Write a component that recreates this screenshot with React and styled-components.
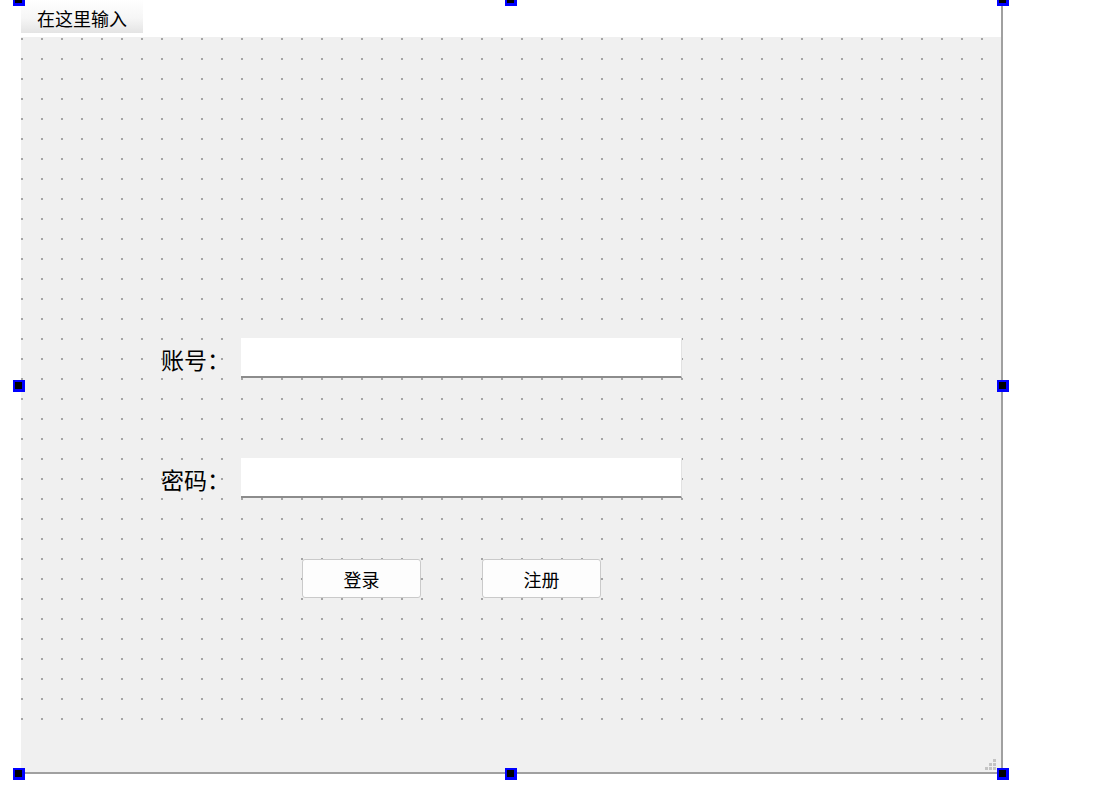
import React from "react";
import styled, { createGlobalStyle } from "styled-components";

const GlobalStyle = createGlobalStyle`
  html, body {
    margin: 0;
    padding: 0;
    background: #ffffff;
  }
  body {
    font-family: "Noto Sans CJK SC", "Noto Sans", sans-serif;
    color: #000;
  }
`;

const Canvas = styled.div`
  position: relative;
  width: 1109px;
  height: 812px;
  overflow: hidden;
  background: #ffffff;
`;

const FormFrame = styled.div`
  margin-left: 21px;
  width: 980px;
  height: 772px;
  display: flex;
  flex-direction: column;
  border-right: 2px solid #a0a0a0;
  border-bottom: 2px solid #a0a0a0;
`;

const MenuBar = styled.div`
  height: 37px;
  flex: none;
  display: flex;
  align-items: flex-start;
  background: #ffffff;
`;

const MenuItem = styled.div`
  width: 122px;
  height: 33px;
  box-sizing: border-box;
  padding: 5px 0 0 16px;
  font-size: 18px;
  line-height: 26px;
  background: linear-gradient(#ffffff 0%, #f6f6f6 55%, #e4e4e4 100%);
`;

const Central = styled.div`
  height: 700px;
  flex: none;
  box-sizing: border-box;
  padding: 301px 0 0 140px;
  background-color: #f0f0f0;
  background-image: linear-gradient(to right, transparent 2px, #f0f0f0 2px),
    linear-gradient(to bottom, #a4a4a4 2px, #f0f0f0 2px);
  background-size: 20px 20px, 20px 20px;
  background-position: 0 1px, 0 1px;
  display: flex;
  flex-direction: column;
`;

const FieldRow = styled.div`
  display: flex;
  align-items: center;
  height: 40px;
  margin-bottom: ${(p) => p.$gap}px;
`;

const Label = styled.div`
  width: 80px;
  font-size: 23px;
  line-height: 40px;
  padding-top: 2px;
  box-sizing: border-box;
`;

const Input = styled.div`
  width: 441px;
  height: 40px;
  box-sizing: border-box;
  background: #ffffff;
  border-right: 1px solid #e2e2e2;
  border-bottom: 2px solid #8c8c8c;
`;

const ButtonRow = styled.div`
  display: flex;
  gap: 61px;
  padding-left: 141px;
`;

const Button = styled.div`
  width: 119px;
  height: 39px;
  box-sizing: border-box;
  border: 1px solid #cacaca;
  border-radius: 3px;
  background: #fdfdfd;
  display: flex;
  align-items: center;
  justify-content: center;
  font-size: 18px;
`;

const StatusBar = styled.div`
  flex: 1;
  background: #f0f0f0;
  display: flex;
  justify-content: flex-end;
  align-items: flex-end;
  padding: 0 4px 2px 0;
`;

const Handle = styled.div`
  position: absolute;
  left: ${(p) => p.$x}px;
  top: ${(p) => p.$y}px;
  width: 12px;
  height: 12px;
  box-sizing: border-box;
  background: #000;
  border: 2px solid #0000ff;
  border-right-width: 3px;
  border-bottom-width: 3px;
`;

const SizeGrip = () => (
  <svg width="12" height="12" viewBox="0 0 12 12">
    <g fill="#c4c4c4">
      <rect x="8" y="1" width="3" height="3" />
      <rect x="4" y="5" width="3" height="3" />
      <rect x="8" y="5" width="3" height="3" />
      <rect x="0" y="9" width="3" height="3" />
      <rect x="4" y="9" width="3" height="3" />
      <rect x="8" y="9" width="3" height="3" />
    </g>
  </svg>
);

const handles = [
  [13, -6], [505, -6], [997, -6],
  [13, 380], [997, 380],
  [13, 768], [505, 768], [997, 768],
];

export default function App() {
  return (
    <>
      <GlobalStyle />
      <Canvas>
        <FormFrame>
          <MenuBar>
            <MenuItem>在这里输入</MenuItem>
          </MenuBar>
          <Central>
            <FieldRow $gap={80}>
              <Label>账号：</Label>
              <Input />
            </FieldRow>
            <FieldRow $gap={61}>
              <Label>密码：</Label>
              <Input />
            </FieldRow>
            <ButtonRow>
              <Button>登录</Button>
              <Button>注册</Button>
            </ButtonRow>
          </Central>
          <StatusBar>
            <SizeGrip />
          </StatusBar>
        </FormFrame>
        {handles.map(([x, y], i) => (
          <Handle key={i} $x={x} $y={y} />
        ))}
      </Canvas>
    </>
  );
}
